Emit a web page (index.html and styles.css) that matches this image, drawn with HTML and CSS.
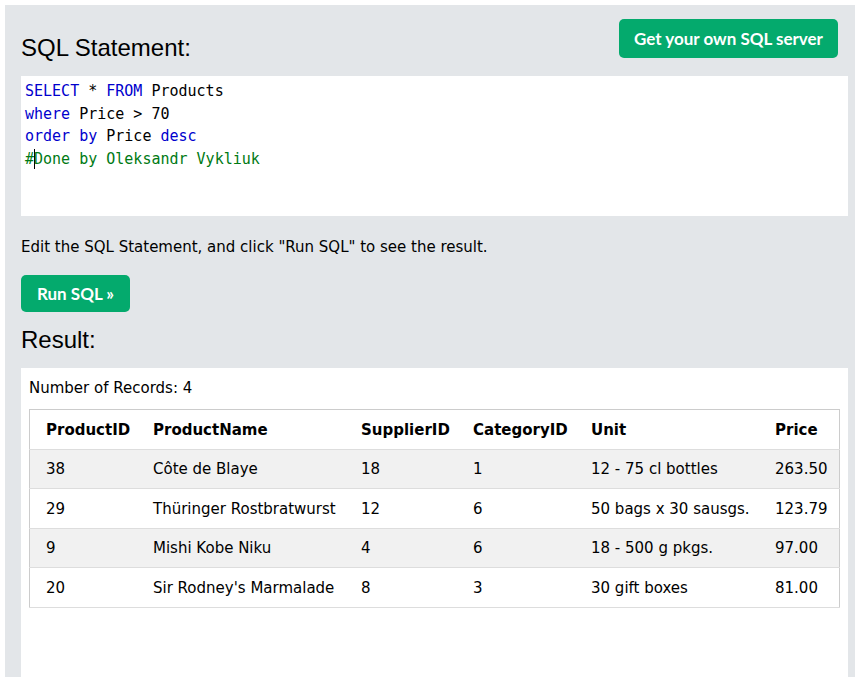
FILE: index.html
```html
<!DOCTYPE html>
<html>
<head>
<meta charset="utf-8">
<link rel="stylesheet" href="styles.css">
</head>
<body>
<div class="panel">
  <div class="toprow">
    <h2 class="heading">SQL Statement:</h2>
    <a class="btn btn-server">Get your own SQL server</a>
  </div>
  <div class="code">
    <div class="line"><span class="kw">SELECT</span> * <span class="kw">FROM</span> Products</div>
    <div class="line"><span class="kw">where</span> Price &gt; 70</div>
    <div class="line"><span class="kw">order</span> <span class="kw">by</span> Price <span class="kw">desc</span></div>
    <div class="line"><span class="cm">#<span class="cursor"></span>Done by Oleksandr Vykliuk</span></div>
  </div>
  <p class="hint">Edit the SQL Statement, and click "Run SQL" to see the result.</p>
  <a class="btn btn-run">Run SQL »</a>
  <h2 class="heading result-heading">Result:</h2>
  <div class="result">
    <p class="count">Number of Records: 4</p>
    <table class="grid">
      <tr><th class="c1">ProductID</th><th class="c2">ProductName</th><th class="c3">SupplierID</th><th class="c4">CategoryID</th><th class="c5">Unit</th><th class="c6">Price</th></tr>
      <tr><td>38</td><td>Côte de Blaye</td><td>18</td><td>1</td><td>12 - 75 cl bottles</td><td>263.50</td></tr>
      <tr><td>29</td><td>Thüringer Rostbratwurst</td><td>12</td><td>6</td><td>50 bags x 30 sausgs.</td><td>123.79</td></tr>
      <tr><td>9</td><td>Mishi Kobe Niku</td><td>4</td><td>6</td><td>18 - 500 g pkgs.</td><td>97.00</td></tr>
      <tr><td>20</td><td>Sir Rodney's Marmalade</td><td>8</td><td>3</td><td>30 gift boxes</td><td>81.00</td></tr>
    </table>
  </div>
</div>
</body>
</html>
```
FILE: styles.css
```css
html, body {
  background: #ffffff;
}
body {
  margin: 5px 0 0 5px;
  font-family: "DejaVu Sans", Verdana, sans-serif;
  font-size: 15px;
  line-height: 1.5;
  color: #000;
  overflow: hidden;
}
.panel {
  background: #e3e6e9;
  width: 827px;
  padding: 14px 7px 0 16px;
}
.toprow {
  display: flex;
  justify-content: space-between;
  align-items: flex-start;
}
.heading {
  font-family: "Liberation Sans", Arial, sans-serif;
  font-weight: normal;
  font-size: 24px;
  line-height: 28px;
  margin: 15px 0 0 0;
}
.btn {
  display: inline-block;
  background: #04aa6d;
  color: #fff;
  font-family: Lato, "Open Sans", sans-serif;
  font-weight: 700;
  font-size: 17px;
  border-radius: 5px;
  text-align: center;
  box-sizing: border-box;
}
.btn-server {
  width: 219px;
  height: 39px;
  line-height: 39px;
  margin-right: 10px;
}
.code {
  margin-top: 14px;
  background: #fff;
  height: 140px;
  box-sizing: border-box;
  padding: 4px 4px;
  font-family: "DejaVu Sans Mono", monospace;
  font-size: 15px;
  line-height: 22.5px;
  color: #000;
}
.kw { color: #0000cd; }
.cm { color: #007a14; }
.cursor {
  display: inline-block;
  width: 0;
  height: 20px;
  border-left: 1px solid #000;
  margin-right: -1px;
  vertical-align: -5px;
}
.hint {
  margin: 19.5px 0 0 0;
}
.btn-run {
  margin-top: 16.5px;
  width: 109px;
  height: 37px;
  line-height: 37px;
}
.result-heading {
  margin-top: 14px;
}
.result {
  margin-top: 14px;
  background: #fff;
  padding: 9px 8px 8px 8px;
  height: 292px;
}
.count {
  margin: 0 0 10px 0;
}
.grid {
  width: 100%;
  border-collapse: collapse;
  border: 1px solid #cccccc;
  table-layout: fixed;
}
.grid tr {
  border-bottom: 1px solid #dddddd;
}
.grid tr:nth-child(even) {
  background: #f1f1f1;
}
.grid th, .grid td {
  text-align: left;
  padding: 8.5px 8px 7.5px 8px;
  vertical-align: top;
  white-space: nowrap;
}
.grid th { font-weight: bold; }
.grid th:first-child, .grid td:first-child {
  padding-left: 16px;
}
.c1 { width: 91px; }
.c2 { width: 192px; }
.c3 { width: 96px; }
.c4 { width: 102px; }
.c5 { width: 168px; }
.c6 { width: 56px; }
```
